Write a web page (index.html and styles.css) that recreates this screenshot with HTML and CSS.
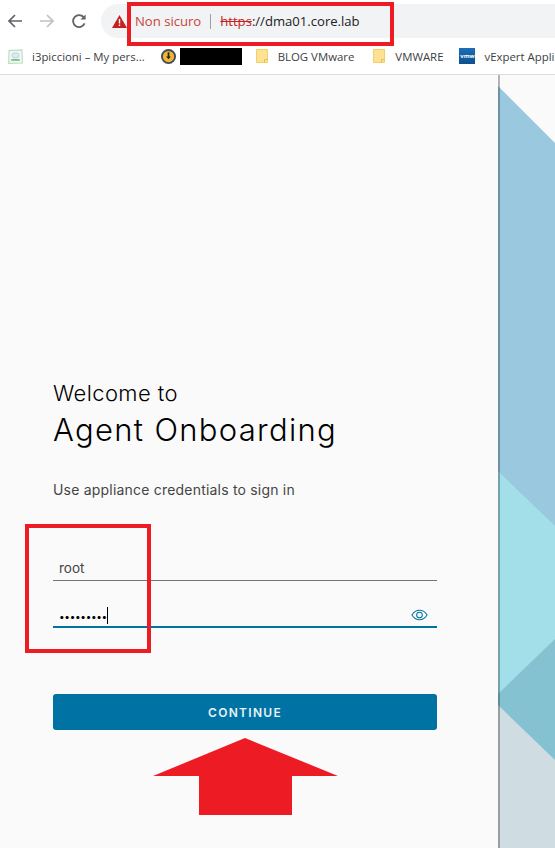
FILE: index.html
```html
<!DOCTYPE html>
<html lang="it">
<head>
    <meta charset="UTF-8">
    <meta name="viewport" content="width=device-width, initial-scale=1.0">
    <title>Agent Onboarding</title>
    <link rel="stylesheet" href="styles.css">
</head>
<body>
    <div class="toolbar">
        <div class="nav-buttons">
            <svg class="nav-icon" viewBox="0 0 16 16" fill="none" stroke="#5f6368" stroke-width="1.7"><path d="M15 8H2M8 2 2 8l6 6"/></svg>
            <svg class="nav-icon" viewBox="0 0 16 16" fill="none" stroke="#bdc1c6" stroke-width="1.7"><path d="M1 8h13M8 2l6 6-6 6"/></svg>
            <svg class="nav-icon" viewBox="0 0 16 16" fill="none" stroke="#5f6368" stroke-width="1.8"><path d="M13.6 10.4A6 6 0 1 1 13 4.6"/><path d="M14.6 1.4v5.2H9.4z" fill="#5f6368" stroke="none"/></svg>
        </div>
        <div class="omnibox">
            <svg class="warning" viewBox="0 0 15 13"><path d="M7.5 0 15 13H0z" fill="#c5221f"/><path d="M6.8 4h1.4v4.6H6.8zM6.8 9.6h1.4V11H6.8z" fill="#fff"/></svg>
            <span class="not-secure">Non sicuro</span>
            <span class="omni-sep"></span>
            <span class="url"><s class="scheme">https</s>://dma01.core.lab</span>
        </div>
    </div>

    <div class="bookmarks">
        <div class="bookmark">
            <svg class="fav" viewBox="0 0 14 14"><path d="M1 1.5 13 .8 13.4 13 .6 13.4z" fill="#f0f8f0" stroke="#b9dcc0"/><ellipse cx="7" cy="6" rx="3.4" ry="2.4" fill="#dcebf3" stroke="#a9c9d8" stroke-width=".7"/><path d="M3 10.2h8" stroke="#6dbb7c" stroke-width="1.5"/></svg>
            <span>i3piccioni – My pers...</span>
        </div>
        <div class="bookmark bookmark-blacked">
            <svg class="fav" viewBox="0 0 16 16"><circle cx="8" cy="8" r="7" fill="#f2b632" stroke="#3f4a5c" stroke-width="2"/><path d="M8 3.5v6" stroke="#222" stroke-width="1.8"/><path d="M5.5 8 8 11l2.500-3z" fill="#222"/></svg>
            <span class="blackout"></span>
        </div>
        <div class="bookmark bookmark-blog">
            <svg class="folder" viewBox="0 0 12 14"><path d="M.5.500h11v13H.5z" fill="#fde293" stroke="#f0cf6d"/><path d="M8.500 13.500v-3h3" fill="none" stroke="#e6bd4f"/></svg>
            <span>BLOG VMware</span>
        </div>
        <div class="bookmark bookmark-vmware">
            <svg class="folder" viewBox="0 0 12 14"><path d="M.5.500h11v13H.5z" fill="#fde293" stroke="#f0cf6d"/><path d="M8.500 13.500v-3h3" fill="none" stroke="#e6bd4f"/></svg>
            <span>VMWARE</span>
        </div>
        <div class="bookmark">
            <span class="vmw-badge">vmw</span>
            <span>vExpert Appli</span>
        </div>
    </div>

    <main class="page">
        <section class="login">
            <p class="welcome">Welcome to</p>
            <h1 class="product">Agent Onboarding</h1>
            <p class="hint">Use appliance credentials to sign in</p>

            <div class="field field-user">root</div>
            <div class="field field-password">
                <span class="dots">•••••••••</span><span class="caret"></span>
                <svg class="eye" viewBox="0 0 18 12" fill="none" stroke="#0072a3" stroke-width="1.100"><path d="M1 6c2-3.300 5-5 8-5s6 1.700 8 5c-2 3.300-5 5-8 5S3 9.300 1 6z"/><circle cx="9" cy="6" r="3"/></svg>
            </div>

            <button class="continue">CONTINUE</button>
        </section>

        <svg class="art" viewBox="0 0 57 773" preserveAspectRatio="none">
            <rect width="57" height="773" fill="#fafafa"/>
            <path d="M0 11 57 68V773H0z" fill="#99c8df"/>
            <path d="M0 396 57 451V773H0z" fill="#a3dfe9"/>
            <path d="M57 564 0 619V773H57z" fill="#84c2d2"/>
            <path d="M0 630 57 685V773H0z" fill="#cfdce1"/>
            <rect width="2" height="773" fill="#000" fill-opacity="0.28"/>
        </svg>
    </main>

    <!-- red marks drawn over the screenshot -->
    <div class="mark mark-url"></div>
    <div class="mark mark-fields"></div>
    <svg class="mark-arrow" viewBox="0 0 185 77"><path d="M92 0 185 38H139V77H46V38H0z" fill="#ed1c24"/></svg>
</body>
</html>
```

FILE: styles.css
```css
* {
    box-sizing: border-box;
}

html, body {
    height: 100%;
}

body {
    margin: 0;
    position: relative;
    display: flex;
    flex-direction: column;
    overflow: hidden;
    background: #fff;
    font-family: "Open Sans", "Noto Sans", sans-serif;
}

/* browser chrome */
.toolbar {
    display: flex;
    height: 40px;
    padding-top: 4px;
    align-items: flex-start;
}

.nav-buttons {
    display: flex;
    width: 101px;
    padding: 9px 0 0 7px;
    gap: 16px;
}

.nav-icon {
    width: 16px;
    height: 16px;
}

.omnibox {
    flex: 1;
    height: 34px;
    display: flex;
    align-items: center;
    padding-left: 11px;
    background: #f1f3f4;
    border-radius: 17px 0 0 17px;
    font-size: 13.1px;
}

.warning {
    width: 15px;
    height: 13px;
    margin-right: 8px;
}

.not-secure {
    color: #c5443f;
}

.omni-sep {
    width: 1px;
    height: 15px;
    margin: 0 9px;
    background: #9aa0a6;
}

.url {
    color: #202124;
}

.scheme {
    color: #c5221f;
}

.bookmarks {
    display: flex;
    height: 35px;
    padding: 0 0 2px 8px;
    gap: 16px;
    align-items: center;
    overflow: hidden;
    white-space: nowrap;
    border-bottom: 1px solid #dadce0;
    font-size: 11.4px;
    color: #3c4043;
}

.bookmark {
    display: flex;
    align-items: center;
    gap: 9px;
    flex: none;
}

.bookmark-blacked {
    gap: 4px;
}

.bookmark-blog {
    gap: 10px;
    margin-left: -2px;
}

.bookmark-vmware {
    gap: 10px;
    margin-left: 3px;
}

.fav {
    width: 15px;
    height: 15px;
}

.folder {
    width: 12px;
    height: 14px;
}

.blackout {
    width: 62px;
    height: 17px;
    background: #000;
}

.vmw-badge {
    width: 16px;
    height: 16px;
    background: linear-gradient(#1d6fb8, #0d4f8f);
    color: #fff;
    font-size: 6px;
    font-weight: 700;
    line-height: 16px;
    text-align: center;
}

/* login page */
.page {
    flex: 1;
    display: flex;
    min-height: 0;
}

.login {
    width: 498px;
    padding: 304px 61px 0 53px;
    background: #fafafa;
    font-family: Inter, "Open Sans", sans-serif;
}

.art {
    flex: 1;
    display: block;
    height: 100%;
}

.welcome {
    margin: 0;
    font-size: 22px;
    font-weight: 300;
    line-height: 28px;
    letter-spacing: 0.4px;
    color: #000;
}

.product {
    margin: 5px 0 0;
    font-size: 31px;
    font-weight: 300;
    line-height: 36px;
    letter-spacing: 1.3px;
    color: #000;
}

.hint {
    margin: 32px 0 0;
    font-size: 14px;
    font-weight: 400;
    line-height: 20px;
    letter-spacing: 0.2px;
    color: #454545;
}

.field {
    position: relative;
    display: flex;
    align-items: center;
    padding-left: 6px;
    font-size: 13.5px;
    color: #454545;
}

.field-user {
    height: 26px;
    margin-top: 55px;
    border-bottom: 1px solid #737373;
}

.field-password {
    height: 29px;
    margin-top: 18px;
    padding-top: 6px;
    border-bottom: 2px solid #0072a3;
}

.dots {
    color: #000;
    font-size: 10px;
    letter-spacing: -0.3px;
}

.caret {
    width: 1px;
    height: 17px;
    background: #000;
}

.eye {
    position: absolute;
    right: 9px;
    top: 10px;
    width: 17px;
    height: 12px;
}

.continue {
    display: block;
    width: 100%;
    height: 36px;
    margin-top: 66px;
    padding: 0;
    border: none;
    border-radius: 3px;
    background: #0072a3;
    color: #e8f2f7;
    font-family: inherit;
    font-size: 12px;
    font-weight: 600;
    letter-spacing: 1.3px;
}

/* annotations on top of the picture */
.mark {
    position: absolute;
    border: 4px solid #ed1c24;
}

.mark-url {
    left: 127px;
    top: 2px;
    width: 267px;
    height: 44px;
}

.mark-fields {
    left: 25px;
    top: 524px;
    width: 126px;
    height: 129px;
}

.mark-arrow {
    position: absolute;
    left: 153px;
    top: 738px;
    width: 185px;
    height: 77px;
}
```
